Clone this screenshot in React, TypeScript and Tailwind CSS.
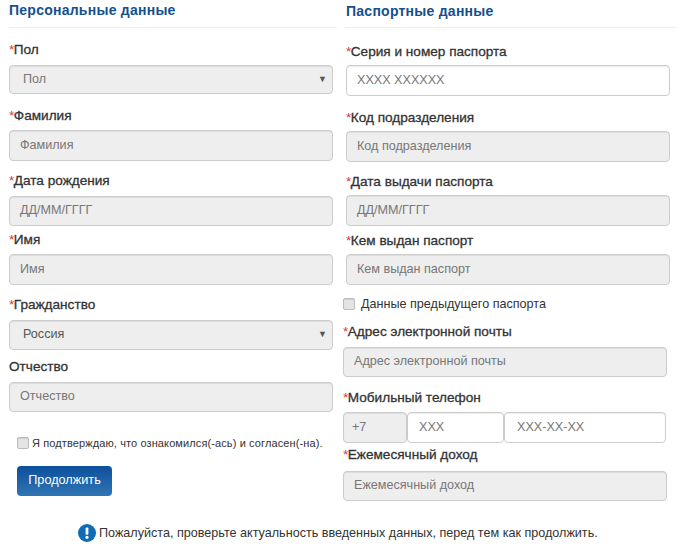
import React from 'react';

const fieldBase = 'rounded-[4px] border border-[#ccc] pb-[2px] text-[12.6px] leading-[20px] shadow-[inset_0_1px_1px_rgba(0,0,0,0.075)]';
const disabled = 'bg-[#eee] text-[#777]';

const Label: React.FC<{ text: string; required?: boolean; className?: string }> = ({ text, required = true, className = '' }) => (
  <div className={`text-[13.6px] leading-[20px] text-[#333] [-webkit-text-stroke:0.3px_#333] ${className}`}>
    {required && <span className="text-[#d9363e] -mr-[0.5px] [-webkit-text-stroke:0]">*</span>}
    {text}
  </div>
);

const Input: React.FC<{ text: string; h: string; active?: boolean }> = ({ text, h, active }) => (
  <div className={`${fieldBase} w-full ${h} ${active ? 'bg-white text-[#777]' : disabled} flex items-center px-[10px]`}>{text}</div>
);

const Select: React.FC<{ text: string; h: string; dark?: boolean }> = ({ text, h, dark }) => (
  <div className={`${fieldBase} w-full ${h} bg-[#eee] ${dark ? 'text-[#555]' : 'text-[#777]'} flex items-center justify-between pl-[13px] pr-[4px]`}>
    <span>{text}</span>
    <span className="text-[9px] text-[#555] mr-[1px]">▼</span>
  </div>
);

const Check: React.FC = () => (
  <span className="w-[12px] h-[12px] rounded-[2px] border border-[#bbb] bg-[#e4e4e4] shrink-0 shadow-[inset_0_1px_1px_rgba(0,0,0,0.1)]" />
);

export default function App() {
  return (
    <div className="w-[680px] h-[550px] bg-white overflow-hidden text-[#333] font-['Liberation_Sans',Arial,sans-serif]">
      <div className="flex h-[515px]">
        {/* left column */}
        <div className="w-[345px] pl-[9px] pr-[12px]">
          <h2 className="pt-[1px] h-[28px] border-b border-[#eee] -mr-[4px] text-[14px] leading-[18px] font-bold tracking-[0.25px] text-[#14508c]">Персональные данные</h2>
          <Label text="Пол" className="mt-[12px]" />
          <div className="mt-[5px]"><Select text="Пол" h="h-[29px]" /></div>
          <Label text="Фамилия" className="mt-[12px]" />
          <div className="mt-[4px]"><Input text="Фамилия" h="h-[31px]" /></div>
          <Label text="Дата рождения" className="mt-[10px]" />
          <div className="mt-[5px]"><Input text="ДД/ММ/ГГГГ" h="h-[30px]" /></div>
          <Label text="Имя" className="mt-[4px]" />
          <div className="mt-[4px]"><Input text="Имя" h="h-[31px]" /></div>
          <Label text="Гражданство" className="mt-[10px]" />
          <div className="mt-[5px]"><Select text="Россия" h="h-[30px]" dark /></div>
          <Label text="Отчество" required={false} className="mt-[7px]" />
          <div className="mt-[5px]"><Input text="Отчество" h="h-[30px]" /></div>
          <div className="mt-[24px] pl-[8px] flex items-center gap-[3px] text-[11px] leading-[14px] tracking-[0.11px] text-[#333]">
            <Check />
            <span>Я подтверждаю, что ознакомился(-ась) и согласен(-на).</span>
          </div>
          <button className="mt-[16px] ml-[8px] w-[95px] h-[30px] rounded-[4px] bg-gradient-to-b from-[#0c4f9c] to-[#2f76b4] text-white text-[12.7px] text-center">Продолжить</button>
        </div>
        {/* right column */}
        <div className="flex-1 pr-[10px]">
          <h2 className="pt-[2px] h-[28px] border-b border-[#eee] -mr-[6px] text-[14px] leading-[18px] font-bold tracking-[0.25px] text-[#14508c] pl-[1px]">Паспортные данные</h2>
          <div className="pl-[1px]">
            <Label text="Серия и номер паспорта" className="mt-[14px]" />
            <div className="mt-[3px]"><Input text="XXXX XXXXXX" h="h-[31px]" active /></div>
            <Label text="Код подразделения" className="mt-[12px]" />
            <div className="mt-[3px]"><Input text="Код подразделения" h="h-[31px]" /></div>
            <Label text="Дата выдачи паспорта" className="mt-[10px]" />
            <div className="mt-[3px]"><Input text="ДД/ММ/ГГГГ" h="h-[31px]" /></div>
            <Label text="Кем выдан паспорт" className="mt-[5px]" />
            <div className="mt-[3px]"><Input text="Кем выдан паспорт" h="h-[31px]" /></div>
          </div>
          <div className="mt-[10px] -ml-[2px] flex items-center gap-[6px] text-[12.6px] leading-[18px] text-[#333]">
            <Check />
            <span>Данные предыдущего паспорта</span>
          </div>
          <div className="-ml-[2px] w-[324px]">
            <Label text="Адрес электронной почты" className="mt-[9px]" />
            <div className="mt-[5px]"><Input text="Адрес электронной почты" h="h-[30px]" /></div>
            <Label text="Мобильный телефон" className="mt-[11px]" />
            <div className="mt-[4px] flex h-[31px]">
              <div className={`${fieldBase} ${disabled} w-[64px] flex items-center pl-[8px]`}>+7</div>
              <div className={`${fieldBase} bg-white text-[#777] w-[97px] flex items-center px-[11px]`}>XXX</div>
              <div className={`${fieldBase} bg-white text-[#777] w-[162px] flex items-center px-[12px]`}>XXX-XX-XX</div>
            </div>
            <Label text="Ежемесячный доход" className="mt-[2px]" />
            <div className="mt-[6px]"><Input text="Ежемесячный доход" h="h-[30px]" /></div>
          </div>
        </div>
      </div>
      <div className="mt-[9px] flex items-center pl-[78px] gap-[3px] text-[12.6px] leading-[18px] text-[#333]">
        <svg width="18" height="18" viewBox="0 0 18 18" className="shrink-0">
          <circle cx="9" cy="9" r="9" fill="#0f6cb6" />
          <rect x="7.6" y="3.5" width="2.8" height="7.2" rx="1" fill="#fff" />
          <circle cx="9" cy="13.3" r="1.6" fill="#fff" />
        </svg>
        <span>Пожалуйста, проверьте актуальность введенных данных, перед тем как продолжить.</span>
      </div>
    </div>
  );
}
